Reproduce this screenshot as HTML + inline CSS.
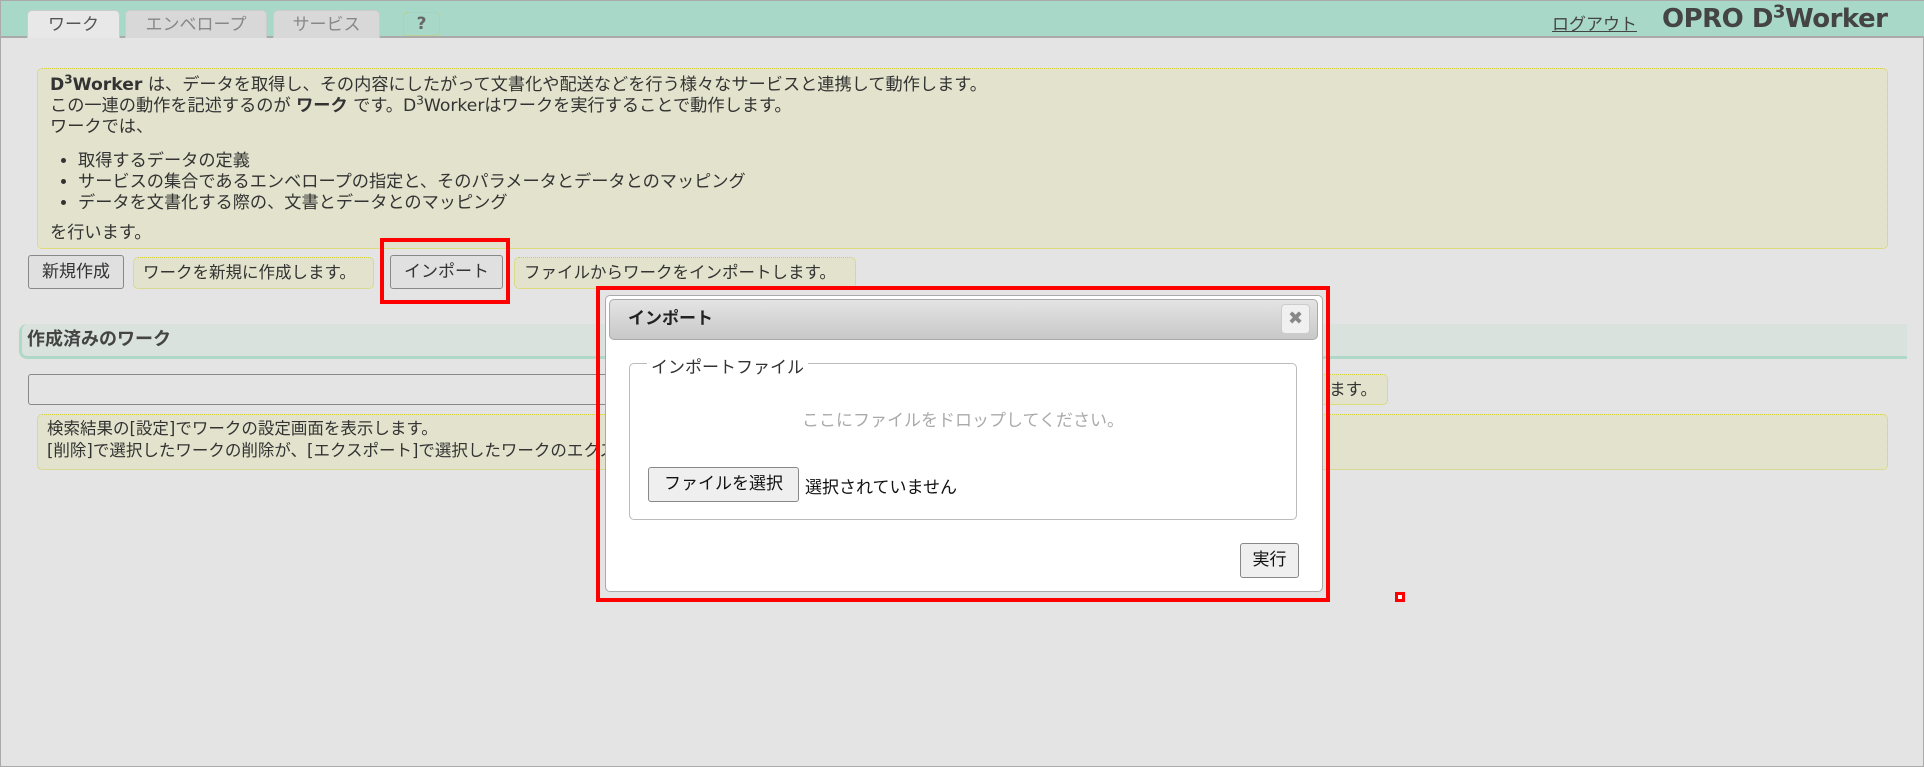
<!DOCTYPE html>
<html><head><meta charset="utf-8">
<style>
*{box-sizing:border-box;margin:0;padding:0}
body{width:1924px;height:767px;background:#e4e4e4;font-family:"DejaVu Sans","Noto Sans CJK JP",sans-serif;color:#333;font-size:16px;position:relative;overflow:hidden;border:1px solid #aaa}
.abs{position:absolute;white-space:nowrap}
sup{line-height:0}
.bar{left:0;top:0;width:1924px;height:37px;background:#a8d8c8;border-bottom:2px solid #aaa}
.tab{top:9px;height:28px;border-radius:5px 5px 0 0;background:#d8d8d8;color:#888;font-size:17px;text-align:center;line-height:28px;border:1px solid #ccc;border-bottom:none}
.box{background:#e3e3cd;border:1px dotted #d4d040;border-radius:5px}
.btn{background:#e0e0e0;border:1px solid #888;border-radius:3px;text-align:center;font-size:17px;color:#333}
.red{border:4px solid #f00}
</style></head><body>
<div class="abs bar"></div>
<div class="abs tab" style="left:26px;width:93px;background:#e8e8e8;color:#555">ワーク</div>
<div class="abs tab" style="left:124px;width:142px">エンベロープ</div>
<div class="abs tab" style="left:272px;width:107px">サービス</div>
<div class="abs" style="left:402px;top:11px;width:37px;height:24px;border:1px dotted #cccc60;border-radius:4px;text-align:center;font-weight:bold;color:#666;line-height:22px;font-size:17px">?</div>
<div class="abs" style="left:1551px;top:9px;font-size:17px;text-decoration:underline;color:#444">ログアウト</div>
<div class="abs" style="left:1661px;top:3px;font-size:26px;font-weight:bold;color:#444;letter-spacing:-0.5px">OPRO D<sup style="font-size:18px">3</sup>Worker</div>

<div class="abs box" style="left:36px;top:67px;width:1851px;height:181px;padding:6px 12px;font-size:17.2px;line-height:21px;white-space:normal">
<div><b>D<sup style="font-size:12px">3</sup>Worker</b> は、データを取得し、その内容にしたがって文書化や配送などを行う様々なサービスと連携して動作します。</div>
<div>この一連の動作を記述するのが <b>ワーク</b> です。D<sup style="font-size:12px">3</sup>Workerはワークを実行することで動作します。</div>
<div>ワークでは、</div>
<ul style="margin:13px 0 9px 28px"><li>取得するデータの定義</li><li>サービスの集合であるエンベロープの指定と、そのパラメータとデータとのマッピング</li><li>データを文書化する際の、文書とデータとのマッピング</li></ul>
<div>を行います。</div>
</div>

<div class="abs btn" style="left:27px;top:254px;width:96px;height:34px;line-height:32px">新規作成</div>
<div class="abs box" style="left:132px;top:256px;width:241px;height:32px;line-height:30px;padding-left:9px;font-size:16.5px">ワークを新規に作成します。</div>
<div class="abs red" style="left:379px;top:237px;width:130px;height:66px"></div>
<div class="abs btn" style="left:389px;top:254px;width:113px;height:34px;line-height:32px">インポート</div>
<div class="abs box" style="left:513px;top:256px;width:342px;height:32px;line-height:30px;padding-left:9px;font-size:16.5px">ファイルからワークをインポートします。</div>

<div class="abs" style="left:18px;top:323px;width:1888px;height:35px;background:#dae2de;border-left:3px solid #b0d8c8;border-bottom:3px solid #b0d8c8;border-radius:8px 0 0 8px;font-weight:bold;font-size:18px;line-height:32px;padding-left:5px;color:#444">作成済みのワーク</div>

<div class="abs" style="left:27px;top:373px;width:1230px;height:31px;border:1px solid #888;border-radius:3px;background:#e4e4e4"></div>
<div class="abs box" style="left:1262px;top:373px;width:125px;height:31px;line-height:29px;text-align:right;padding-right:10px;font-size:16.5px">ます。</div>
<div class="abs box" style="left:36px;top:413px;width:1851px;height:56px;padding:3px 9px;line-height:22px;font-size:16.5px">
<div>検索結果の[設定]でワークの設定画面を表示します。</div>
<div>[削除]で選択したワークの削除が、[エクスポート]で選択したワークのエクスポートができます。</div>
</div>

<div class="abs red" style="left:595px;top:285px;width:734px;height:316px"></div>
<div class="abs" style="left:604px;top:294px;width:718px;height:297px;background:#fff;border:1px solid #aaa;border-radius:5px"></div>
<div class="abs" style="left:608px;top:298px;width:709px;height:41px;background:linear-gradient(#e4e4e4,#c8c8c8);border:1px solid #aaa;border-radius:5px;font-weight:bold;font-size:17px;line-height:39px;padding-left:18px;color:#222">インポート</div>
<div class="abs" style="left:1280px;top:303px;width:29px;height:30px;background:#f0f0f0;border:1px solid #ccc;border-radius:4px;text-align:center;line-height:28px;color:#888;font-weight:bold;font-size:18px">✖</div>
<div class="abs" style="left:628px;top:362px;width:668px;height:157px;border:1px solid #bbb;border-radius:5px"></div>
<div class="abs" style="left:646px;top:352px;background:#fff;padding:0 4px;font-size:17px;color:#333">インポートファイル</div>
<div class="abs" style="left:628px;top:405px;width:668px;text-align:center;color:#aaa;font-size:17px">ここにファイルをドロップしてください。</div>
<div class="abs btn" style="left:647px;top:466px;width:151px;height:35px;line-height:33px;background:#efefef;color:#111">ファイルを選択</div>
<div class="abs" style="left:804px;top:472px;font-size:17px;color:#111">選択されていません</div>
<div class="abs btn" style="left:1239px;top:542px;width:59px;height:35px;line-height:33px;background:#efefef;color:#111">実行</div>
<div class="abs" style="left:1394px;top:591px;width:10px;height:10px;border:3px solid #f00;background:#fff"></div>
</body></html>
